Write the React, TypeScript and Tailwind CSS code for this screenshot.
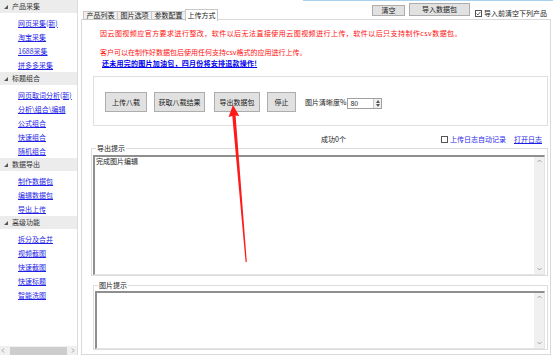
import React from 'react';

const groups = [
  { title: '产品采集', items: ['网页采集(新)', '淘宝采集', '1688采集', '拼多多采集'] },
  { title: '标题组合', items: ['网页取词分析(新)', '分析\\组合\\编辑', '公式组合', '快速组合', '随机组合'] },
  { title: '数据导出', items: ['制作数据包', '编辑数据包', '导出上传'] },
  { title: '高级功能', items: ['拆分及合并', '视频截图', '快速截图', '快速标题', '智能洗图'] },
];

const tabs = ['产品列表', '图片选项', '参数配置', '上传方式'];

// tiny scroll arrow used in the scrollbars
const Chevron = ({ dir }: { dir: 'up' | 'down' | 'left' | 'right' }) => {
  const pts = {
    up: '0.5,3 2.5,1 4.5,3',
    down: '0.5,1 2.5,3 4.5,1',
    left: '3,0.5 1,2.5 3,4.5',
    right: '1,0.5 3,2.5 1,4.5',
  }[dir];
  return (
    <svg width="5" height="5" viewBox="0 0 5 5">
      <polyline points={pts} fill="none" stroke="#9a9a9a" strokeWidth="0.9" />
    </svg>
  );
};

const TextBox = ({ height, text }: { height: string; text?: string }) => (
  <div className={`flex ${height} border-t-2 border-l-2 border-r border-b border-t-[#8f8f8f] border-l-[#8f8f8f] border-r-[#e3e3e3] border-b-[#e3e3e3] bg-white`}>
    <div className="flex-1 pl-[1px] text-[7px] leading-[9px] text-[#222]">{text}</div>
    <div className="flex w-[10px] flex-col items-center justify-between bg-[#f0f0f0] py-[2px]">
      <Chevron dir="up" />
      <Chevron dir="down" />
    </div>
  </div>
);

const WinButton = ({ label, className }: { label: string; className: string }) => (
  <button className={`flex items-center justify-center border border-[#adadad] bg-[#e1e1e1] text-[7px] text-[#222] ${className}`}>
    {label}
  </button>
);

export default function App() {
  return (
    <div className="relative flex h-[355px] w-[553px] overflow-hidden bg-white font-['Noto_Sans_CJK_SC',sans-serif]">
      {/* Sidebar */}
      <aside className="flex w-[78px] flex-col border-r border-[#dcdcdc] bg-white">
        <div className="flex-1">
          {groups.map((g) => (
            <div key={g.title}>
              <div className="flex h-[13px] items-center bg-[#ececec] pl-[4px]">
                <svg width="4" height="4" viewBox="0 0 4 4">
                  <polygon points="4,0 4,4 0,4" fill="#555" />
                </svg>
                <span className="ml-[4px] text-[7px] leading-[9px] text-[#333]">{g.title}</span>
              </div>
              <div className="pt-[3px]">
                {g.items.map((it) => (
                  <div key={it} className="flex h-[14px] items-center pl-[18px]">
                    <a href="#" className="text-[7px] leading-[9px] text-[#1f1fe6] underline">
                      {it}
                    </a>
                  </div>
                ))}
              </div>
            </div>
          ))}
        </div>
        <div className="flex h-[9px] items-center bg-[#f0f0f0] px-[1px]">
          <Chevron dir="left" />
          <div className="mx-[4px] h-[8px] flex-1 bg-[#cdcdcd]" />
          <Chevron dir="right" />
        </div>
      </aside>

      {/* Main */}
      <main className="flex flex-1 flex-col">
        <div className="relative z-10 flex h-[19px] items-start">
          <div className="ml-[5px] mt-[8px] flex h-[12px] items-end">
            {tabs.map((t, i) =>
              i === 3 ? (
                <div key={t} className="-mb-[1px] flex h-[12px] w-[33px] items-center justify-center border border-b-0 border-[#c8c8c8] bg-white text-[7px] text-[#222]">
                  {t}
                </div>
              ) : (
                <div key={t} className="flex h-[9px] w-[34px] items-center justify-center border border-r-0 border-[#c8c8c8] bg-[#f0f0f0] text-[7px] text-[#222]">
                  {t}
                </div>
              )
            )}
          </div>
          <div className="ml-auto flex h-[19px] w-[250px] items-start justify-end border-t border-[#a8d2f0] pr-[6px] pt-[2px]">
            <WinButton label="清空" className="mt-[2px] h-[11px] w-[33px]" />
            <WinButton label="导入数据包" className="ml-[4px] h-[13px] w-[61px]" />
            <div className="ml-[5px] mt-[6px] flex items-center">
              <span className="flex h-[7px] w-[7px] items-center justify-center border border-[#555] bg-white">
                <svg width="5" height="5" viewBox="0 0 5 5">
                  <polyline points="0.6,2.6 1.9,3.9 4.4,1" fill="none" stroke="#333" strokeWidth="0.8" />
                </svg>
              </span>
              <span className="ml-[2px] text-[7px] leading-[8px] text-[#222]">导入前清空下列产品</span>
            </div>
          </div>
        </div>

        <div className="ml-[3px] mr-[2px] flex-1 border border-[#d9d9d9] bg-white">
          <p className="mt-[8px] pl-[18px] text-[7px] leading-[10px] tracking-[0.45px] text-[#ff1010]">
            因云图视频应官方要求进行整改，软件以后无法直接使用云图视频进行上传，软件以后只支持制作csv数据包。
          </p>
          <p className="mt-[9px] pl-[18px] text-[7px] leading-[10px] text-[#ff1010]">
            客户可以在制作好数据包后使用任何支持csv格式的应用进行上传。
          </p>
          <p className="mt-[1px] pl-[20px] text-[7px] font-bold leading-[10px] tracking-[0.25px] text-[#0000ee] underline">
            还未用完的图片加油包，四月份将安排退款操作!
          </p>

          <div className="ml-[11px] mr-[2px] mt-[8px] flex h-[50px] items-start border border-[#e0e0e0] pl-[11px] pt-[15px]">
            <WinButton label="上传八载" className="h-[20px] w-[42px]" />
            <WinButton label="获取八载结果" className="ml-[7px] h-[20px] w-[51px]" />
            <WinButton label="导出数据包" className="ml-[9px] h-[20px] w-[46px]" />
            <WinButton label="停止" className="ml-[7px] h-[20px] w-[29px]" />
            <span className="ml-[9px] mt-[6px] text-[7px] leading-[9px] text-[#222]">图片清晰度%</span>
            <div className="ml-[1px] mt-[6px] flex h-[11px] w-[35px] border border-[#a0a0a0] bg-white">
              <span className="flex-1 pl-[2px] text-[7px] leading-[9px] text-[#222]">80</span>
              <div className="flex w-[8px] flex-col items-center justify-center gap-[1px] border-l border-[#c8c8c8] bg-[#f0f0f0]">
                <svg width="4" height="3" viewBox="0 0 4 3">
                  <polygon points="0,3 2,0 4,3" fill="#555" />
                </svg>
                <svg width="4" height="3" viewBox="0 0 4 3">
                  <polygon points="0,0 4,0 2,3" fill="#555" />
                </svg>
              </div>
            </div>
          </div>

          <div className="mt-[8px] flex h-[10px] items-center pl-[239px] pr-[8px]">
            <span className="text-[7px] leading-[9px] text-[#222]">成功0个</span>
            <span className="ml-auto h-[7px] w-[7px] border border-[#555] bg-white" />
            <span className="ml-[2px] text-[7px] leading-[9px] text-[#2a2ae8]">上传日志自动记录</span>
            <a href="#" className="ml-[8px] text-[7px] leading-[9px] text-[#1f1fe6] underline">
              打开日志
            </a>
          </div>

          <fieldset className="ml-[9px] mr-[2px] border border-[#dcdcdc] pb-0">
            <legend className="ml-[4px] px-[1px] text-[7px] leading-[8px] text-[#222]">导出提示</legend>
            <div className="ml-[1px] mr-[2px] mt-[3px]">
              <TextBox height="h-[120px]" text="完成图片编辑" />
            </div>
          </fieldset>

          <fieldset className="ml-[11px] mr-[2px] mt-[5px] border border-[#dcdcdc]">
            <legend className="ml-[4px] px-[1px] text-[7px] leading-[8px] text-[#222]">图片提示</legend>
            <div className="ml-[1px] mr-[2px] mt-[2px]">
              <TextBox height="h-[58px]" />
            </div>
          </fieldset>
        </div>
      </main>

      {/* red annotation arrow */}
      <svg className="pointer-events-none absolute left-0 top-0" width="553" height="355" viewBox="0 0 553 355">
        <polygon
          points="233,105 228.5,117 232.3,116 245.6,262 246.8,262 235.6,115.6 239.3,116"
          fill="#ff1a1a"
        />
      </svg>
    </div>
  );
}
